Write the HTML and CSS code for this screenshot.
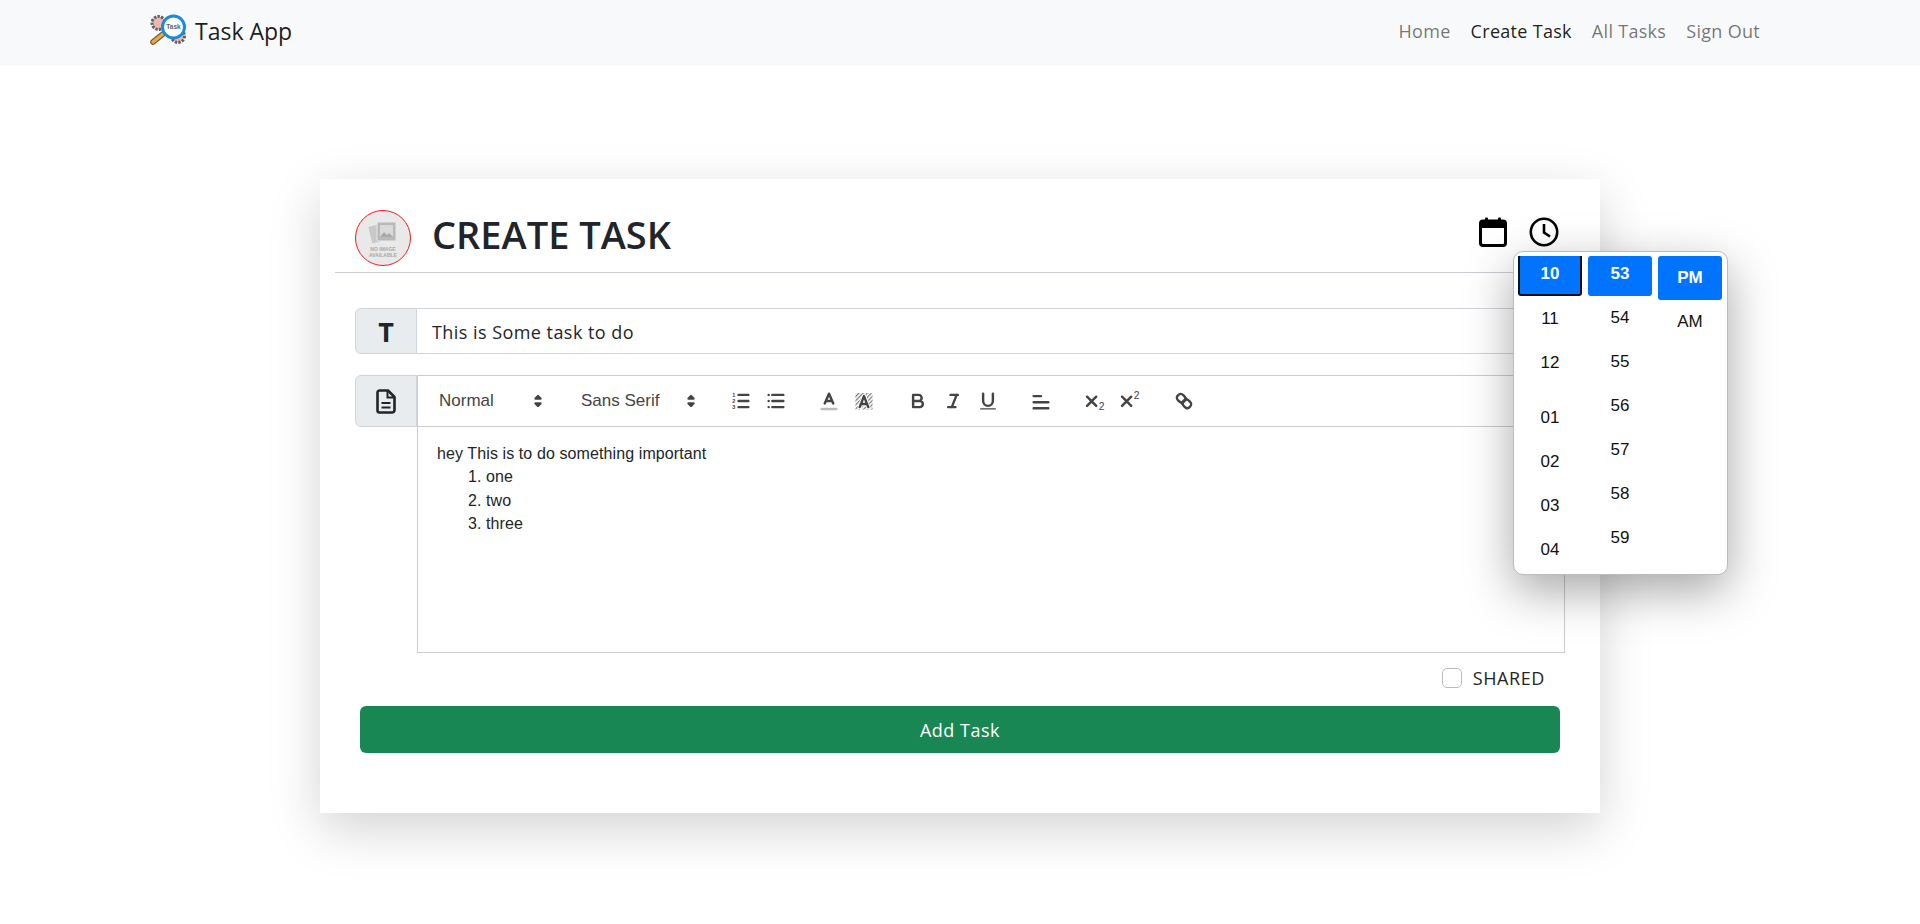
FILE: index.html
```html
<!DOCTYPE html>
<html lang="en">
<head>
  <meta charset="UTF-8">
  <title>Task App</title>
  <meta name="viewport" content="width=device-width, initial-scale=1">
  <link rel="stylesheet" href="styles.css">
</head>
<body>
  <nav class="navbar">
    <a class="brand" href="#">
      <svg class="brand-logo" viewBox="0 0 38 32" width="38" height="32">
        <circle cx="8.500" cy="9" r="6.500" fill="#f2b5ab" stroke="#566270" stroke-width="3" stroke-dasharray="2.400 1.200"/>
        <circle cx="28" cy="22" r="6.500" fill="#f2b5ab" stroke="#566270" stroke-width="3" stroke-dasharray="2.400 1.200"/>
        <line x1="3" y1="28" x2="13" y2="20" stroke="#6b5a3a" stroke-width="5.500" stroke-linecap="round"/>
        <line x1="3" y1="28" x2="13" y2="20" stroke="#eba83f" stroke-width="3.500" stroke-linecap="round"/>
        <circle cx="23.500" cy="13" r="11" fill="#fff" stroke="#1b8bd6" stroke-width="3"/>
        <text x="23.500" y="15" class="brand-logo-text">Task</text>
      </svg>
      <span>Task App</span>
    </a>
    <div class="nav-links">
      <a href="#">Home</a>
      <a href="#" class="active">Create Task</a>
      <a href="#">All Tasks</a>
      <a href="#">Sign Out</a>
    </div>
  </nav>

  <main class="page">
    <div class="card">
      <div class="card-header">
        <svg class="avatar" viewBox="0 0 56 56" width="56" height="56">
          <circle cx="28" cy="28" r="27.500" fill="#e9e9e9" stroke="#f01c1c"/>
          <rect x="15" y="15" width="15" height="17" rx="1" fill="#c8c8c8" transform="rotate(-14 22 23)"/>
          <rect x="22" y="12" width="19" height="19" rx="1" fill="#b9b9b9" stroke="#e9e9e9"/>
          <rect x="25" y="15" width="13" height="12" fill="#d9d9d9"/>
          <path d="M25 27l4-5 3 3 2-2 4 4z" fill="#a9a9a9"/>
          <text x="28" y="41" class="avatar-text">NO IMAGE</text>
          <text x="28" y="47" class="avatar-text">AVAILABLE</text>
        </svg>
        <h1>CREATE TASK</h1>
        <div class="header-icons">
          <svg viewBox="0 0 28 30" width="28" height="30">
            <rect x="1.500" y="4" width="25" height="24.500" rx="2.500" fill="none" stroke="#000" stroke-width="3"/>
            <rect x="1.500" y="4" width="25" height="7" fill="#000"/>
            <rect x="6" y="0.500" width="3" height="5" rx="1" fill="#000"/>
            <rect x="19" y="0.500" width="3" height="5" rx="1" fill="#000"/>
          </svg>
          <svg viewBox="0 0 30 30" width="30" height="30">
            <circle cx="15" cy="15" r="13.200" fill="none" stroke="#000" stroke-width="2.600"/>
            <path d="M15 7v8.500l6 4" fill="none" stroke="#000" stroke-width="2.600"/>
          </svg>
        </div>
      </div>

      <form class="card-body">
        <div class="input-group">
          <span class="addon addon-title">T</span>
          <input class="title-input" type="text" value="This is Some task to do">
        </div>

        <div class="editor-row">
          <span class="addon addon-doc">
            <svg viewBox="0 0 20 25" width="20" height="25">
              <path d="M3.500 1.500h8.500l6.500 6.500v13a2.500 2.500 0 0 1-2.500 2.500H3.500a2 2 0 0 1-2-2V3.500a2 2 0 0 1 2-2z" fill="none" stroke="#212529" stroke-width="2.600" stroke-linejoin="round"/>
              <path d="M11.500 1.500v7h7" fill="none" stroke="#212529" stroke-width="2"/>
              <path d="M5.500 14h9M5.500 18.500h9" stroke="#212529" stroke-width="2.200"/>
            </svg>
          </span>
          <div class="editor">
            <div class="toolbar">
              <span class="picker picker-size">Normal
                <svg viewBox="0 0 18 18" class="ql"><polygon points="7 11 9 13 11 11"/><polygon points="7 7 9 5 11 7"/></svg>
              </span>
              <span class="picker picker-font">Sans Serif
                <svg viewBox="0 0 18 18" class="ql"><polygon points="7 11 9 13 11 11"/><polygon points="7 7 9 5 11 7"/></svg>
              </span>

              <span class="tool-group">
                <button type="button" class="tool">
                  <svg viewBox="0 0 18 18" class="ql">
                    <path d="M7 4h8M7 9h8M7 14h8"/>
                    <text x="3" y="5.500" class="ql-num">1</text>
                    <text x="3" y="10.500" class="ql-num">2</text>
                    <text x="3" y="15.500" class="ql-num">3</text>
                  </svg>
                </button>
                <button type="button" class="tool">
                  <svg viewBox="0 0 18 18" class="ql">
                    <path d="M6 4h9M6 9h9M6 14h9M3 4h.01M3 9h.01M3 14h.01"/>
                  </svg>
                </button>
              </span>

              <span class="tool-group">
                <button type="button" class="tool">
                  <svg viewBox="0 0 18 18" class="ql">
                    <path d="M3 15.500h12" class="ql-bar"/>
                    <path d="M5.500 11L9 3l3.500 8M6.400 9h5.200"/>
                  </svg>
                </button>
                <button type="button" class="tool">
                  <svg viewBox="0 0 18 18" class="ql">
                    <defs>
                      <pattern id="hatch" width="2.400" height="2.400" patternUnits="userSpaceOnUse" patternTransform="rotate(45)">
                        <rect width="1" height="2.400" fill="#777" stroke="none"/>
                      </pattern>
                    </defs>
                    <rect x="2" y="2.500" width="14" height="13.500" fill="url(#hatch)" stroke="none"/>
                    <path d="M5.500 14L9 5l3.500 9M6.400 11.500h5.200" class="ql-halo"/>
                    <path d="M5.500 14L9 5l3.500 9M6.400 11.500h5.200"/>
                  </svg>
                </button>
              </span>

              <span class="tool-group">
                <button type="button" class="tool">
                  <svg viewBox="0 0 18 18" class="ql">
                    <path d="M5 4h4.500a2.500 2.500 0 0 1 0 5H5zM5 9h5.500a2.500 2.500 0 0 1 0 5H5z"/>
                  </svg>
                </button>
                <button type="button" class="tool">
                  <svg viewBox="0 0 18 18" class="ql">
                    <path d="M7 4h6M5 14h6M8 14l4-10"/>
                  </svg>
                </button>
                <button type="button" class="tool">
                  <svg viewBox="0 0 18 18" class="ql">
                    <path d="M5 3v6a4 4 0 0 0 8 0V3"/>
                    <path d="M3 15.500h12" class="ql-thin"/>
                  </svg>
                </button>
              </span>

              <span class="tool-group">
                <button type="button" class="tool">
                  <svg viewBox="0 0 18 18" class="ql">
                    <path d="M3 5h6M3 10h12M3 15h12"/>
                  </svg>
                </button>
              </span>

              <span class="tool-group">
                <button type="button" class="tool">
                  <svg viewBox="0 0 18 18" class="ql">
                    <path d="M2.500 5.500l7.500 7.500M10 5.500l-7.500 7.500"/>
                    <text x="12" y="16.400" class="ql-small">2</text>
                  </svg>
                </button>
                <button type="button" class="tool">
                  <svg viewBox="0 0 18 18" class="ql">
                    <path d="M2.500 5.500l7.500 7.500M10 5.500l-7.500 7.500"/>
                    <text x="12" y="7.500" class="ql-small">2</text>
                  </svg>
                </button>
              </span>

              <span class="tool-group">
                <button type="button" class="tool tool-link">
                  <svg viewBox="0 0 18 18" class="ql">
                    <path d="M7 11l4-4"/>
                    <path d="M8.900 4.577a3.476 3.476 0 0 1 .36 4.679A3.476 3.476 0 0 1 4.577 8.900C3.185 7.500 2.035 6.400 4.217 4.217S7.500 3.185 8.900 4.577z"/>
                    <path d="M13.423 9.100a3.476 3.476 0 0 0-4.679-.36 3.476 3.476 0 0 0 .36 4.679c1.392 1.392 2.500 2.542 4.679.36S14.815 10.500 13.423 9.100z"/>
                  </svg>
                </button>
              </span>
            </div>
            <div class="editor-text">
              <p>hey This is to do something important</p>
              <ol>
                <li>one</li>
                <li>two</li>
                <li>three</li>
              </ol>
            </div>
          </div>
        </div>

        <label class="shared">
          <input type="checkbox">
          <span>SHARED</span>
        </label>

        <button type="button" class="add-btn">Add Task</button>
      </form>

      <div class="time-popup">
        <ul class="time-col">
          <li class="selected focused">10</li>
          <li>11</li>
          <li>12</li>
          <li class="hour-gap">01</li>
          <li>02</li>
          <li>03</li>
          <li>04</li>
        </ul>
        <ul class="time-col">
          <li class="selected">53</li>
          <li>54</li>
          <li>55</li>
          <li>56</li>
          <li>57</li>
          <li>58</li>
          <li>59</li>
        </ul>
        <ul class="time-col">
          <li class="selected meridiem">PM</li>
          <li>AM</li>
        </ul>
      </div>
    </div>
  </main>
</body>
</html>
```

FILE: styles.css
```css
* {
  box-sizing: border-box;
}

body {
  margin: 0;
  font-family: "Open Sans", "Noto Sans", sans-serif;
  color: #212529;
  background: #fff;
}

a {
  text-decoration: none;
}

/* navbar */
.navbar {
  height: 65px;
  background: #f8f9fa;
  display: flex;
  align-items: center;
  justify-content: space-between;
  padding: 0 160px 0 150px;
}

.brand {
  display: flex;
  align-items: center;
  gap: 7px;
  font-size: 23px;
  color: rgba(0, 0, 0, .9);
}

.brand span {
  margin-bottom: 4px;
}

.brand-logo {
  margin-bottom: 6px;
}

.brand-logo-text {
  font: 700 6.500px "Liberation Sans", sans-serif;
  fill: #5a6570;
  text-anchor: middle;
}

.nav-links {
  display: flex;
  gap: 20px;
  margin-bottom: 4px;
  font-size: 18px;
  letter-spacing: .3px;
}

.nav-links a {
  color: rgba(0, 0, 0, .55);
}

.nav-links a.active {
  color: rgba(0, 0, 0, .9);
}

/* card */
.page {
  min-height: 859px;
  padding-top: 114px;
  display: flex;
  justify-content: center;
  align-items: flex-start;
}

.card {
  position: relative;
  width: 1280px;
  height: 634px;
  background: #fff;
  box-shadow: 0 16px 48px rgba(0, 0, 0, .175);
}

.card-header {
  margin-left: 15px;
  margin-right: 15px;
  height: 94px;
  padding: 31px 26px 0 20px;
  display: flex;
  align-items: flex-start;
  border-bottom: 1px solid #c9ccd0;
}

.avatar {
  flex: none;
}

.avatar-text {
  font: 700 5px "Liberation Sans", sans-serif;
  fill: #a8a8a8;
  text-anchor: middle;
}

.card-header h1 {
  margin: -2px 0 0 21px;
  font-size: 38px;
  line-height: 52px;
  font-weight: 600;
}

.header-icons {
  margin-left: auto;
  margin-top: 7px;
  display: flex;
  align-items: flex-start;
  gap: 22px;
}

.card-body {
  padding: 35px 35px 0;
  display: flex;
  flex-direction: column;
}

.input-group {
  display: flex;
  height: 46px;
  margin-bottom: 21px;
}

.addon {
  flex: none;
  display: flex;
  align-items: center;
  justify-content: center;
  background: #e9ecef;
  border: 1px solid #ced4da;
  border-radius: 6px 0 0 6px;
}

.addon-title {
  width: 62px;
  font-size: 27px;
  font-weight: 700;
  color: #212529;
}

.addon-doc {
  width: 62px;
  height: 52px;
}

.title-input {
  flex: 1;
  border: 1px solid #ced4da;
  border-left: 0;
  border-radius: 0 6px 6px 0;
  padding: 2px 15px 0;
  font: 18px "Open Sans", sans-serif;
  letter-spacing: .45px;
  color: #212529;
}

/* editor */
.editor-row {
  display: flex;
  align-items: flex-start;
}

.editor {
  flex: 1;
  height: 278px;
  border: 1px solid #ccc;
  font-family: "Liberation Sans", sans-serif;
}

.toolbar {
  height: 51px;
  border-bottom: 1px solid #ccc;
  padding-left: 13px;
  display: flex;
  align-items: center;
  color: #444;
}

.picker {
  display: flex;
  align-items: center;
  justify-content: space-between;
  padding: 0 8px;
  font-size: 17px;
}

.picker-size {
  width: 126px;
  margin-right: 16px;
}

.picker-font {
  width: 137px;
  margin-right: 13px;
}

.tool-group {
  display: flex;
  margin-right: 18.500px;
}

.tool {
  width: 35px;
  height: 24px;
  padding: 0;
  border: 0;
  background: none;
  display: flex;
  align-items: center;
  justify-content: center;
}

.tool-link {
  padding-left: 2px;
}

.ql {
  width: 22px;
  height: 22px;
  flex: none;
  fill: none;
  stroke: #444;
  stroke-width: 2;
  stroke-linecap: round;
  stroke-linejoin: round;
}

.picker .ql polygon {
  fill: #444;
}

.ql-bar {
  stroke: #bbb;
}

.ql-thin {
  stroke-width: 1;
}

.ql-halo {
  stroke: #fff;
  stroke-width: 3.500;
}

.ql-num {
  font: 700 4.500px "Liberation Sans", sans-serif;
  fill: #444;
  stroke: none;
  text-anchor: middle;
}

.ql-small {
  font: 8.500px "Liberation Sans", sans-serif;
  fill: #444;
  stroke: none;
}

.editor-text {
  padding: 15px 19px;
  font-size: 16px;
  letter-spacing: .1px;
  line-height: 23.300px;
  color: #212529;
}

.editor-text p {
  margin: 0;
}

.editor-text ol {
  margin: 0;
  padding-left: 49px;
}

.shared {
  align-self: flex-end;
  display: flex;
  align-items: center;
  gap: 11px;
  margin: 15px 20px 18px 0;
  height: 20px;
  font-size: 18px;
  letter-spacing: .6px;
}

.shared input {
  appearance: none;
  width: 20px;
  height: 20px;
  margin: 0;
  border: 1px solid #bbb;
  border-radius: 5px;
  background: #fff;
}

.add-btn {
  margin: 0 5px;
  height: 47px;
  border: 0;
  border-radius: 6px;
  background: #198754;
  color: #fff;
  font: 18px "Open Sans", sans-serif;
  letter-spacing: .5px;
}

/* time picker popup */
.time-popup {
  position: absolute;
  left: 1193px;
  top: 72px;
  width: 215px;
  height: 324px;
  padding: 4px;
  display: flex;
  gap: 6px;
  background: #fff;
  border: 1px solid #bbb;
  border-radius: 10px;
  box-shadow: 0 16px 48px rgba(0, 0, 0, .35);
  font-family: "Liberation Sans", sans-serif;
  font-size: 17px;
}

.time-col {
  list-style: none;
  margin: 0;
  padding: 0;
  width: 64px;
  overflow: hidden;
}

.time-col li {
  height: 40px;
  margin-bottom: 4px;
  padding-top: 9px;
  line-height: 18px;
  text-align: center;
  color: #111;
}

.time-col li.hour-gap {
  margin-top: 15px;
}

.time-col li.selected {
  background: #0074ff;
  color: #fff;
  font-weight: 700;
  border-radius: 3px;
}

.time-col li.focused {
  margin-top: -2px;
  margin-bottom: 5px;
  height: 42px;
  border: 2px solid #111;
}

.time-col li.meridiem {
  height: 44px;
  padding-top: 13px;
}
```
